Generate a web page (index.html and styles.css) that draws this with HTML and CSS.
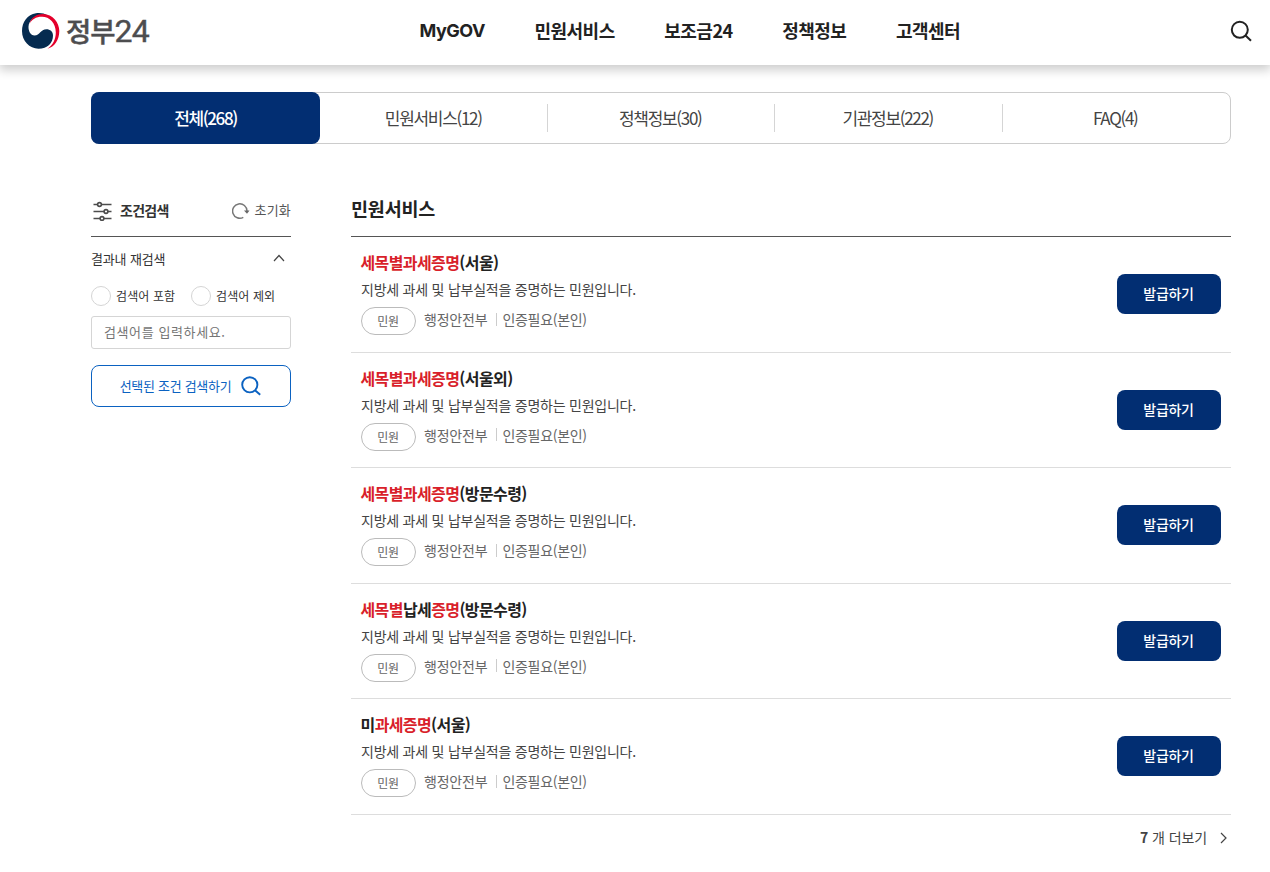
FILE: index.html
```html
<!DOCTYPE html>
<html lang="ko">
<head>
<meta charset="utf-8">
<title>정부24</title>
<link rel="stylesheet" href="styles.css">
</head>
<body>
<header class="header">
  <a class="logo">
    <svg class="logo-mark" viewBox="0 0 38 38" width="38" height="38">
      <path fill="#052b50" d="M26 3.500C22 1 17 .5 14 1.300C5.500 2.500 0 10 0 19C0 29 7.500 36.700 16.500 36.700C25.500 36.700 31 31 31 23.500C31 19.500 28 17.300 24.500 17.300C18.500 17.300 18 23.500 12.500 23.500C8.500 23.500 6.300 19 6.500 14.500C7 8 13 3 21 3.500Z"/>
      <path fill="#e4002b" d="M7.500 12C9 5 15 2 21 2C31 2 37.300 11 37.300 19C37.300 28 32.500 35 25.500 36.700C31 33 33.800 27 33.800 20.500C33.800 11 27.500 4.800 20 4.800C14 4.800 9.500 7.500 7.500 12Z"/>
    </svg>
    <span class="logo-text">정부<span class="logo-num">24</span></span>
  </a>
  <nav class="nav">
    <a class="latin">MyGOV</a><a>민원서비스</a><a>보조금24</a><a>정책정보</a><a>고객센터</a>
  </nav>
  <svg class="search" viewBox="0 0 22 22" width="22" height="22" fill="none" stroke="#222" stroke-width="2"><circle cx="9.800" cy="9.800" r="8"/><path d="M15.300 15.300L21 20.800"/></svg>
</header>
<main class="main">
  <div class="tabs">
    <a class="tab active">전체(268)</a><a class="tab">민원서비스(12)</a><a class="tab">정책정보(30)</a><a class="tab">기관정보(222)</a><a class="tab">FAQ(4)</a>
  </div>
  <div class="columns">
    <aside class="filter">
      <div class="filter-head">
        <svg viewBox="0 0 20 20" width="20" height="20" fill="none" stroke="#4c4c4c" stroke-width="1.600"><path d="M.5 3.500H4.500M8.500 3.500H18.500M.5 10.500H11M15 10.500H18.500M.5 17.500H7M11 17.500H18.500"/><circle cx="6.500" cy="3.500" r="1.900"/><circle cx="13" cy="10.500" r="1.900"/><circle cx="9" cy="17.500" r="1.900"/></svg>
        <strong>조건검색</strong>
        <a class="reset"><svg viewBox="0 0 18 18" width="18" height="18"><path fill="none" stroke="#777" stroke-width="1.500" d="M11.300 15.300A7.200 7.200 0 1 1 15 9"/><path fill="#666" d="M12 8.500H17.500L15 11.800Z"/></svg><span>초기화</span></a>
      </div>
      <div class="filter-title"><span>결과내 재검색</span><svg viewBox="0 0 12 8" width="12" height="8" fill="none" stroke="#444" stroke-width="1.200"><path d="M1 7L6 1.500L11 7"/></svg></div>
      <div class="radios"><label><i></i><span>검색어 포함</span></label><label><i></i><span>검색어 제외</span></label></div>
      <div class="input">검색어를 입력하세요.</div>
      <a class="apply"><span>선택된 조건 검색하기</span><svg viewBox="0 0 20 20" width="20" height="20" fill="none" stroke="#0b62c1" stroke-width="1.900"><circle cx="8.800" cy="8.800" r="7.600"/><path d="M14 14.200L19.200 18.800"/></svg></a>
    </aside>
    <section class="results">
      <h2>민원서비스</h2>
      <ul class="list">
        <li class="item"><div><h3><em>세목별과세증명</em>(서울)</h3><p>지방세 과세 및 납부실적을 증명하는 민원입니다.</p><div class="meta"><span class="tag">민원</span><span class="dept">행정안전부</span><span class="auth">인증필요(본인)</span></div></div><a class="issue">발급하기</a></li>
        <li class="item"><div><h3><em>세목별과세증명</em>(서울외)</h3><p>지방세 과세 및 납부실적을 증명하는 민원입니다.</p><div class="meta"><span class="tag">민원</span><span class="dept">행정안전부</span><span class="auth">인증필요(본인)</span></div></div><a class="issue">발급하기</a></li>
        <li class="item"><div><h3><em>세목별과세증명</em>(방문수령)</h3><p>지방세 과세 및 납부실적을 증명하는 민원입니다.</p><div class="meta"><span class="tag">민원</span><span class="dept">행정안전부</span><span class="auth">인증필요(본인)</span></div></div><a class="issue">발급하기</a></li>
        <li class="item"><div><h3><em>세목별</em>납세<em>증명</em>(방문수령)</h3><p>지방세 과세 및 납부실적을 증명하는 민원입니다.</p><div class="meta"><span class="tag">민원</span><span class="dept">행정안전부</span><span class="auth">인증필요(본인)</span></div></div><a class="issue">발급하기</a></li>
        <li class="item"><div><h3>미<em>과세증명</em>(서울)</h3><p>지방세 과세 및 납부실적을 증명하는 민원입니다.</p><div class="meta"><span class="tag">민원</span><span class="dept">행정안전부</span><span class="auth">인증필요(본인)</span></div></div><a class="issue">발급하기</a></li>
      </ul>
      <a class="more"><span><b>7</b> 개 더보기</span><svg viewBox="0 0 8 12" width="8" height="12" fill="none" stroke="#444" stroke-width="1.200"><path d="M1 1L6 6L1 11"/></svg></a>
    </section>
  </div>
</main>
</body>
</html>
```
FILE: styles.css
```css
* { box-sizing: border-box; }
body { margin: 0; background: #fff; color: #222; font-family: "Noto Sans CJK KR", sans-serif; height: 872px; overflow: hidden; }
h2, h3, p, ul { margin: 0; padding: 0; }
em, i { font-style: normal; }
svg { display: block; flex: none; }
a, span, strong, label { white-space: nowrap; }
.header { height: 65px; display: flex; align-items: center; padding: 0 18px 3px 22px; box-shadow: 0 4px 10px 1px rgba(0,0,0,.2); }
.logo { display: flex; align-items: center; width: 397.5px; gap: 6px; }
.logo-text { font-size: 27.5px; font-weight: 500; letter-spacing: -1px; line-height: 38px; padding-bottom: 3px; color: #4d4d4f; -webkit-text-stroke: .4px #4d4d4f; }
.logo-num { font-family: Roboto, sans-serif; font-size: 32px; font-weight: 400; letter-spacing: -.8px; line-height: 30px; }
.nav { display: flex; gap: 49.5px; flex: 1; font-size: 18px; font-weight: 700; letter-spacing: -.5px; line-height: 26px; }
.nav a { padding-bottom: 2px; margin-top: -1px; }
.nav .latin { font-family: Inter, sans-serif; margin-top: 0; padding-bottom: 0; }
.main { padding: 27px 39px 0 91px; }
.tabs { display: grid; grid-template-columns: 228px repeat(4, 1fr); height: 52px; border: 1px solid #ccc; border-radius: 8px; }
.tab { display: flex; align-items: center; justify-content: center; padding: 0 1px 1px 0; font-size: 17px; letter-spacing: -1.3px; color: #444; }
.tab + .tab + .tab { margin-left: -1px; background: linear-gradient(#d5d5d5, #d5d5d5) left center / 1px 28px no-repeat; }
.active { margin: -1px 0 -1px -1px; padding-right: 0; background: #022e72; color: #fff; border-radius: 8px; font-weight: 500; letter-spacing: -1.400px; }
.columns { display: grid; grid-template-columns: 200px 880px; gap: 60px; }
.filter { padding-top: 43px; color: #333; }
.filter-head { display: flex; align-items: center; height: 50px; border-bottom: 1px solid #555; padding-left: 2px; gap: 7px; }
.filter-head svg { margin-top: -1px; }
.filter-head strong { font-size: 14px; letter-spacing: -.7px; padding-bottom: 4px; }
.reset { display: flex; align-items: center; gap: 5px; margin-left: auto; font-size: 13px; letter-spacing: .2px; color: #555; }
.reset span { padding-bottom: 4px; }
.filter-title { display: flex; justify-content: space-between; align-items: center; height: 44px; padding: 0 6px 2px 0; font-size: 13px; letter-spacing: -.15px; }
.radios { display: flex; gap: 15px; height: 30px; align-items: center; font-size: 12px; }
.radios label { display: flex; align-items: center; gap: 5px; width: 85px; letter-spacing: .1px; }
.radios span { padding-bottom: 1px; }
.radios i { width: 20px; height: 20px; border: 1px solid #d5d5d5; border-radius: 50%; }
.input { height: 33px; margin-top: 5px; border: 1px solid #d5d5d5; border-radius: 3px; padding-left: 12px; font-size: 13px; line-height: 29px; letter-spacing: .6px; color: #757575; }
.apply { display: flex; align-items: center; justify-content: center; gap: 10px; height: 42px; margin-top: 16px; padding-right: 1px; border: 1px solid #0b62c1; border-radius: 8px; color: #0b62c1; font-size: 13px; letter-spacing: -.3px; }
.apply span { padding-bottom: 2px; }
.results { padding-top: 50px; }
.results h2 { height: 43px; border-bottom: 1px solid #555; font-size: 18.5px; line-height: 28px; letter-spacing: -.2px; }
.list { list-style: none; }
.item { display: flex; justify-content: space-between; align-items: center; height: 115.5px; padding: 0 10px; border-bottom: 1px solid #ddd; }
.item h3 { font-size: 16px; line-height: 26px; letter-spacing: -.6px; margin: -4px 0 0 -.5px; }
.item em { color: #d91f2b; }
.item p { font-size: 14px; line-height: 27px; letter-spacing: -.24px; color: #444; padding-top: 1px; }
.meta { display: flex; height: 28px; margin-top: 4px; align-items: center; font-size: 14px; letter-spacing: -.2px; color: #666; }
.tag { width: 55px; height: 28px; border: 1px solid #bbb; border-radius: 14px; text-align: center; font-size: 12px; line-height: 25px; margin-right: 8px; padding-right: 1px; }
.dept, .auth { line-height: 20px; margin-top: -4px; }
.auth { margin-left: 9px; padding-left: 6px; background: linear-gradient(#ccc, #ccc) left center / 1px 13px no-repeat; letter-spacing: -.3px; }
.issue { width: 104px; height: 40px; background: #022e72; color: #fff; border-radius: 8px; text-align: center; font-size: 14px; font-weight: 500; line-height: 38px; letter-spacing: -.3px; padding-right: 1px; }
.more { display: flex; justify-content: flex-end; align-items: center; gap: 13px; height: 46px; padding-right: 3px; font-size: 14px; letter-spacing: -.1px; color: #444; }
.more span { padding-bottom: 2px; }
```
